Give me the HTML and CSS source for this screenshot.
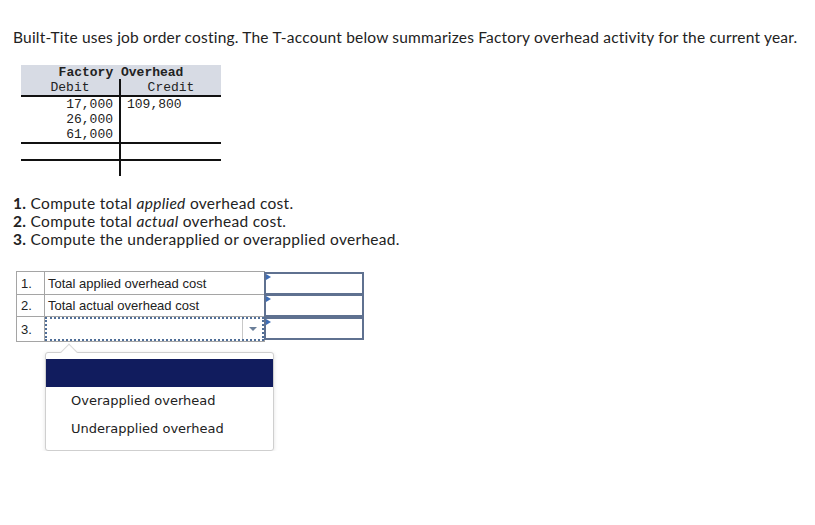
FILE: index.html
```html
<!DOCTYPE html>
<html>
<head>
<meta charset="utf-8">
<link rel="stylesheet" href="styles.css">
</head>
<body>
<div class="page">
  <p class="intro">Built-Tite uses job order costing. The T-account below summarizes Factory overhead activity for the current year.</p>

  <div class="taccount">
    <div class="t-title">Factory Overhead</div>
    <div class="t-grid">
      <div class="c l head">Debit</div><div class="c r head">Credit</div>
      <div class="c l num top">17,000</div><div class="c r num top">109,800</div>
      <div class="c l num">26,000</div><div class="c r num"></div>
      <div class="c l num line">61,000</div><div class="c r num line"></div>
      <div class="c l num line"></div><div class="c r num line"></div>
      <div class="c l num"></div><div class="c r num"></div>
    </div>
  </div>

  <div class="questions">
    <div><b>1.</b> Compute total <i>applied</i> overhead cost.</div>
    <div><b>2.</b> Compute total <i>actual</i> overhead cost.</div>
    <div><b>3.</b> Compute the underapplied or overapplied overhead.</div>
  </div>

  <div class="answer">
    <table class="atable">
      <tr><td class="n">1.</td><td class="lab">Total applied overhead cost</td><td class="inp"><div class="box"><span class="flag"></span></div></td></tr>
      <tr><td class="n">2.</td><td class="lab">Total actual overhead cost</td><td class="inp"><div class="box"><span class="flag"></span></div></td></tr>
      <tr><td class="n">3.</td><td class="lab sel"><div class="select"><span class="sel-text"></span><span class="arrow"><span class="tri"></span></span></div></td><td class="inp"><div class="box"><span class="flag"></span></div></td></tr>
    </table>
    <div class="choices">
      <span class="notch"></span>
      <div class="opt active"></div>
      <div class="opt">Overapplied overhead</div>
      <div class="opt">Underapplied overhead</div>
    </div>
  </div>
</div>
</body>
</html>
```
FILE: styles.css
```css
* { box-sizing: border-box; }
html, body { margin: 0; padding: 0; background: #fff; }
body { font-family: Lato, "Open Sans", sans-serif; color: #222; }
.page { padding: 28px 0 0 13px; }
.intro { margin: 0; font-size: 15.5px; line-height: 18px; letter-spacing: 0.2px; }

.taccount { margin: 19px 0 0 8px; width: 200px; font-family: "Liberation Mono", monospace; font-size: 13px; color: #222; }
.t-title { background: #d7dbe4; height: 14px; line-height: 15px; text-align: center; font-weight: bold; }
.t-grid { display: grid; grid-template-columns: 100px 100px; }
.c { height: 15px; line-height: 15px; }
.c.l { border-right: 2px solid #111; text-align: right; padding-right: 6px; }
.c.r { padding-left: 6px; }
.c.head { background: #d7dbe4; height: 18px; line-height: 17px; border-bottom: 2px solid #111; text-align: center; padding: 0; }
.c.r.head { padding-left: 0; }
.c.l.head { padding-right: 0; }
.c.line { border-bottom: 2px solid #111; height: 17px; }

.questions { margin-top: 18px; font-size: 15.5px; line-height: 18px; letter-spacing: 0.3px; }
.questions b { font-weight: bold; }

.answer { margin: 23px 0 0 3px; font-family: "Liberation Sans", Arial, sans-serif; font-size: 13px; }
.atable { border-collapse: collapse; }
.atable td { border: 1px solid #a5a5a5; height: 22px; padding: 0; }
.atable td.n { width: 28px; padding-left: 4px; }
.atable td.lab { width: 220px; padding-left: 3px; }
.atable td.inp { width: 100px; border: none; padding: 0; }
.box { position: relative; width: 100px; height: 23px; border: 2px solid #5f7190; margin-left: -1px; }
.atable tr:nth-child(2) .box, .atable tr:nth-child(3) .box { margin-top: -1px; }
.flag { position: absolute; left: 0; top: 0; width: 0; height: 0; border-top: 3px solid transparent; border-bottom: 3px solid transparent; border-left: 5px solid #3e6db5; }
.atable td.sel { padding: 0; }
.select { display: flex; height: 24px; border: 2px dotted #4f6e98; }
.sel-text { flex: 1; }
.arrow { width: 20px; border-left: 1px solid #c8c8c8; display: flex; align-items: center; justify-content: center; }
.tri { width: 0; height: 0; border-left: 4px solid transparent; border-right: 4px solid transparent; border-top: 4px solid #6b7f99; }

.choices { position: relative; margin: 10px 0 0 29px; width: 229px; padding: 6px 0 7px; background: #fff; border: 1px solid #cfcfcf; border-radius: 3px; box-shadow: 0 1px 4px rgba(0,0,0,0.12); font-family: "DejaVu Sans", Verdana, sans-serif; font-size: 13px; color: #222; }
.notch { position: absolute; left: 17px; top: -7px; width: 12px; height: 12px; background: #fff; border-left: 1px solid #d8d8d8; border-top: 1px solid #d8d8d8; transform: rotate(45deg); }
.opt { position: relative; height: 28px; line-height: 28px; padding-left: 25px; }
.opt.active { background: #111c5e; }
```
